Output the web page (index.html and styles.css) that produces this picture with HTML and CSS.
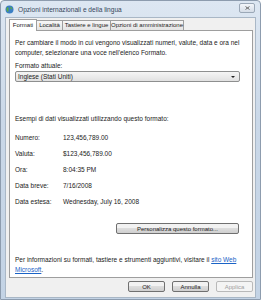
FILE: index.html
```html
<!DOCTYPE html>
<html>
<head>
<meta charset="utf-8">
<link rel="stylesheet" href="styles.css">
</head>
<body>
<div class="window">
  <div class="titlebar">
    <svg class="ticon" width="9" height="9" viewBox="0 0 9 9">
      <circle cx="4.5" cy="4.5" r="4" fill="#3b7fc4"/>
      <path d="M2 2.5 C3 2 4 3 3.5 4 C3 5 4 6 3 7 C2 6 1.3 5 1.5 3.5Z" fill="#5fae3e"/>
      <path d="M5 1.5 C6.5 2 7.5 3 7 4.5 C6 4.5 5.5 3.5 5 1.5Z" fill="#5fae3e"/>
    </svg>
    <span class="ttext">Opzioni internazionali e della lingua</span>
    <div class="close"><svg width="5" height="4" viewBox="0 0 5 4"><path d="M0.5 0.5 L4.5 3.5 M4.5 0.5 L0.5 3.5" stroke="#6a6a6a" stroke-width="1"/></svg></div>
  </div>
  <div class="client">
    <div class="tabs">
      <div class="tab sel t1">Formati</div>
      <div class="tab t2">Località</div>
      <div class="tab t3">Tastiere e lingue</div>
      <div class="tab t4">Opzioni di amministrazione</div>
    </div>
    <div class="panel">
      <p class="intro">Per cambiare il modo in cui vengono visualizzati numeri, valute, data e ora nel computer, selezionare una voce nell'elenco Formato.</p>
      <p class="label">Formato attuale:</p>
      <div class="select"><span>Inglese (Stati Uniti)</span><span class="arrow"></span></div>
      <p class="examples">Esempi di dati visualizzati utilizzando questo formato:</p>
      <div class="rows">
        <div class="row"><span class="k">Numero:</span><span>123,456,789.00</span></div>
        <div class="row"><span class="k">Valuta:</span><span>$123,456,789.00</span></div>
        <div class="row"><span class="k">Ora:</span><span>8:04:35 PM</span></div>
        <div class="row"><span class="k">Data breve:</span><span>7/16/2008</span></div>
        <div class="row"><span class="k">Data estesa:</span><span>Wednesday, July 16, 2008</span></div>
      </div>
      <div class="custom"><div class="btn wide">Personalizza questo formato...</div></div>
      <p class="info">Per informazioni su formati, tastiere e strumenti aggiuntivi, visitare il <a>sito Web</a><br><a>Microsoft</a>.</p>
    </div>
    <div class="buttons">
      <div class="btn">OK</div>
      <div class="btn">Annulla</div>
      <div class="btn dis">Applica</div>
    </div>
  </div>
</div>
</body>
</html>
```
FILE: styles.css
```css
html, body { margin: 0; padding: 0; }
body { width: 261px; height: 300px; overflow: hidden; font-family: "Liberation Sans", Arial, sans-serif; font-size: 6.5px; color: #222; }
.window { width: 261px; height: 300px; box-sizing: border-box; background: linear-gradient(#dde7f2, #cad8e8 40%, #c3d3e5); border: 1px solid #8d9cae; border-radius: 4px 4px 0 0; display: flex; flex-direction: column; }
.titlebar { height: 16px; flex: none; display: flex; align-items: center; padding: 0 5px 0 4px; }
.ticon { margin-right: 4px; }
.ttext { color: #36475a; font-size: 6.6px; flex: 1; }
.close { width: 14px; height: 8px; margin-top: -2px; border: 1px solid #9ba8b7; border-radius: 2px; background: linear-gradient(#f3f6fa, #d5dde7); display: flex; align-items: center; justify-content: center; }
.client { flex: 1; margin: 0 4px 1px 4px; background: #f0f0f0; border: 1px solid #a9b7c6; display: flex; flex-direction: column; }
.tabs { display: flex; height: 12px; flex: none; align-items: flex-end; padding-left: 3px; position: relative; z-index: 1; }
.tab { height: 10px; box-sizing: border-box; border: 1px solid #9e9e9e; border-right: none; border-bottom: none; background: linear-gradient(#f7f7f7, #e4e4e4); font-size: 6px; line-height: 9px; text-align: center; white-space: nowrap; }
.tab.t4 { border-right: 1px solid #9e9e9e; }
.tab.sel { height: 12px; margin-bottom: -1px; background: #fff; border-right: 1px solid #9e9e9e; margin-right: -1px; line-height: 11px; }
.t1 { width: 28px; }
.t2 { width: 26px; }
.t3 { width: 48px; }
.t4 { width: 74px; }
.panel { height: 248px; box-sizing: border-box; flex: none; background: #fff; border: 1px solid #9e9e9e; margin: 0 2px 0 3px; padding: 7px 5px 0 5px; display: flex; flex-direction: column; }
p { margin: 0; }
.intro { line-height: 10px; }
.label { margin-top: 3px; line-height: 9px; }
.select { margin-top: 1px; height: 11px; flex: none; box-sizing: border-box; border: 1px solid #8e8f8f; border-radius: 2px; background: linear-gradient(#f5f5f5, #e1e1e1); display: flex; align-items: center; justify-content: space-between; padding: 0 4px 0 2px; width: 225px; }
.arrow { width: 0; height: 0; border-left: 2px solid transparent; border-right: 2px solid transparent; border-top: 2.5px solid #222; }
.examples { margin-top: 32px; line-height: 9px; }
.rows { margin-top: 10px; display: flex; flex-direction: column; gap: 7px; }
.row { display: flex; height: 9px; line-height: 9px; }
.row .k { width: 48px; }
.custom { display: flex; justify-content: flex-end; margin-top: 17px; padding-right: 8px; }
.btn { height: 11px; flex: none; box-sizing: border-box; border: 1px solid #707070; border-radius: 2px; background: linear-gradient(#f2f2f2 45%, #dddddd 50%, #cfcfcf); display: flex; align-items: center; justify-content: center; font-size: 6px; }
.btn.wide { width: 123px; }
.info { margin-top: 21px; line-height: 10px; }
.info a { color: #1a63c6; text-decoration: underline; }
.buttons { display: flex; justify-content: flex-end; gap: 7px; padding: 3px 2px 0 0; }
.buttons .btn { width: 37px; }
.btn.dis { color: #a0a0a0; border-color: #b9b9b9; background: #f4f4f4; }
```
